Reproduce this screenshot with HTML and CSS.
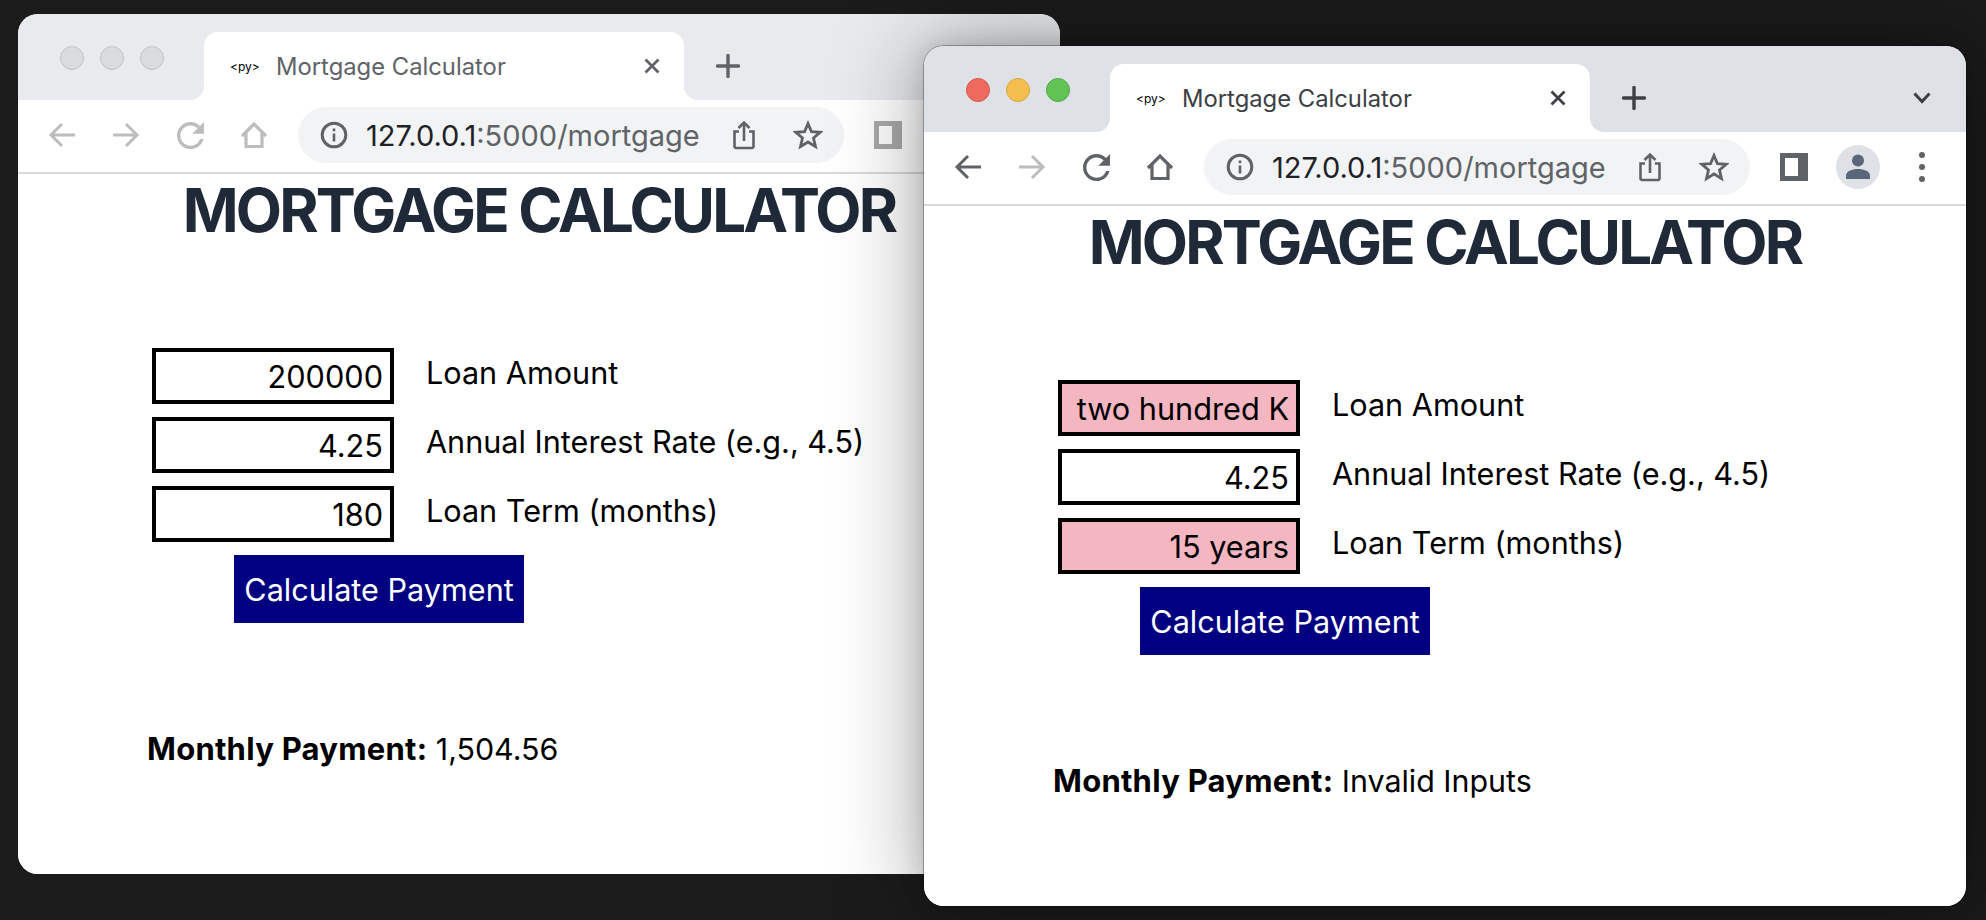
FILE: index.html
```html
<!DOCTYPE html>
<html lang="en">
<head>
<meta charset="utf-8">
<title>Mortgage Calculator</title>
<link rel="stylesheet" href="styles.css">
</head>
<body>
<svg class="defs" width="0" height="0" aria-hidden="true">
  <symbol id="i-back" viewBox="0 0 28 28"><path d="M27 14H4M14 3 3 14l11 11" fill="none" stroke="currentColor" stroke-width="3"/></symbol>
  <symbol id="i-forward" viewBox="0 0 28 28"><path d="M1 14h23M14 3l11 11-11 11" fill="none" stroke="currentColor" stroke-width="3"/></symbol>
  <symbol id="i-reload" viewBox="4 4 16 16"><path fill="currentColor" d="M17.65 6.35A7.95 7.95 0 0 0 12 4c-4.42 0-7.99 3.58-7.99 8s3.57 8 7.99 8c3.73 0 6.84-2.55 7.73-6h-2.08A5.99 5.99 0 0 1 12 18c-3.31 0-6-2.69-6-6s2.69-6 6-6c1.66 0 3.14.69 4.22 1.78L13 11h7V4l-2.35 2.35z"/></symbol>
  <symbol id="i-home" viewBox="0 0 28 28"><path d="M2 15 14 3l12 12M6 12v13.500h16V12" fill="none" stroke="currentColor" stroke-width="3.200"/></symbol>
  <symbol id="i-info" viewBox="0 0 28 28"><circle cx="14" cy="14" r="11.800" fill="none" stroke="currentColor" stroke-width="3"/><path d="M12.700 12.500h2.600v8h-2.600zM12.700 7.500h2.600v2.700h-2.600z" fill="currentColor"/></symbol>
  <symbol id="i-share" viewBox="0 0 24 30"><path d="M7 11.500H2.500v15a1.500 1.500 0 0 0 1.500 1.500h16a1.500 1.500 0 0 0 1.500-1.500v-15H17M12 21V3M6.500 8 12 2.500 17.500 8" fill="none" stroke="currentColor" stroke-width="2.600"/></symbol>
  <symbol id="i-star" viewBox="0 0 30 30"><path d="m15 3.500 3.400 8.100 8.800.7-6.700 5.700 2 8.600-7.500-4.600-7.500 4.600 2-8.600-6.700-5.700 8.800-.7z" fill="none" stroke="currentColor" stroke-width="2.800"/></symbol>
  <symbol id="i-close" viewBox="0 0 16 16"><path d="m1.500 1.500 13 13M14.500 1.500l-13 13" fill="none" stroke="currentColor" stroke-width="2.800"/></symbol>
  <symbol id="i-plus" viewBox="0 0 24 24"><path d="M12 1.500v21M1.500 12h21" fill="none" stroke="currentColor" stroke-width="3.400" stroke-linecap="round"/></symbol>
  <symbol id="i-chevron" viewBox="0 0 18 12"><path d="m1.500 1.500 7.500 8 7.500-8" fill="none" stroke="currentColor" stroke-width="3"/></symbol>
  <symbol id="i-user" viewBox="0 0 44 44"><circle cx="22" cy="15.500" r="6" fill="currentColor"/><path d="M10 34v-3c0-5 6-7 12-7s12 2 12 7v3z" fill="currentColor"/></symbol>
  <symbol id="i-dots" viewBox="0 0 8 32"><circle cx="4" cy="4" r="3" fill="currentColor"/><circle cx="4" cy="16" r="3" fill="currentColor"/><circle cx="4" cy="28" r="3" fill="currentColor"/></symbol>
</svg>

<section class="window window-inactive">
  <header class="strip">
    <div class="lights"><span class="light"></span><span class="light"></span><span class="light"></span></div>
    <div class="tab">
      <span class="favicon">&lt;py&gt;</span>
      <span class="tab-title">Mortgage Calculator</span>
      <svg class="ic-close"><use href="#i-close"/></svg>
    </div>
    <svg class="ic-plus"><use href="#i-plus"/></svg>
    <svg class="ic-chevron"><use href="#i-chevron"/></svg>
  </header>
  <nav class="toolbar">
    <span class="slot dim"><svg class="ic-arrow"><use href="#i-back"/></svg></span>
    <span class="slot dim"><svg class="ic-arrow"><use href="#i-forward"/></svg></span>
    <span class="slot dim"><svg class="ic-reload"><use href="#i-reload"/></svg></span>
    <span class="slot dim"><svg class="ic-arrow"><use href="#i-home"/></svg></span>
    <div class="pill">
      <svg class="ic-info"><use href="#i-info"/></svg>
      <span class="url">127.0.0.1<span class="url-rest">:5000/mortgage</span></span>
      <svg class="ic-share"><use href="#i-share"/></svg>
      <svg class="ic-star"><use href="#i-star"/></svg>
    </div>
    <span class="panel"></span>
    <span class="avatar"><svg class="ic-user"><use href="#i-user"/></svg></span>
    <svg class="ic-dots"><use href="#i-dots"/></svg>
  </nav>
  <main class="page">
    <h1 class="heading">MORTGAGE CALCULATOR</h1>
    <form class="calc">
      <div class="row"><input class="field" type="text" value="200000"><label class="field-label">Loan Amount</label></div>
      <div class="row"><input class="field" type="text" value="4.25"><label class="field-label">Annual Interest Rate (e.g., 4.5)</label></div>
      <div class="row"><input class="field" type="text" value="180"><label class="field-label">Loan Term (months)</label></div>
      <button class="submit" type="button">Calculate Payment</button>
    </form>
    <p class="result"><strong>Monthly Payment:</strong> 1,504.56</p>
  </main>
</section>

<section class="window window-active">
  <header class="strip">
    <div class="lights"><span class="light red"></span><span class="light yellow"></span><span class="light green"></span></div>
    <div class="tab">
      <span class="favicon">&lt;py&gt;</span>
      <span class="tab-title">Mortgage Calculator</span>
      <svg class="ic-close"><use href="#i-close"/></svg>
    </div>
    <svg class="ic-plus"><use href="#i-plus"/></svg>
    <svg class="ic-chevron"><use href="#i-chevron"/></svg>
  </header>
  <nav class="toolbar">
    <span class="slot"><svg class="ic-arrow"><use href="#i-back"/></svg></span>
    <span class="slot dim"><svg class="ic-arrow"><use href="#i-forward"/></svg></span>
    <span class="slot"><svg class="ic-reload"><use href="#i-reload"/></svg></span>
    <span class="slot"><svg class="ic-arrow"><use href="#i-home"/></svg></span>
    <div class="pill">
      <svg class="ic-info"><use href="#i-info"/></svg>
      <span class="url">127.0.0.1<span class="url-rest">:5000/mortgage</span></span>
      <svg class="ic-share"><use href="#i-share"/></svg>
      <svg class="ic-star"><use href="#i-star"/></svg>
    </div>
    <span class="panel"></span>
    <span class="avatar"><svg class="ic-user"><use href="#i-user"/></svg></span>
    <svg class="ic-dots"><use href="#i-dots"/></svg>
  </nav>
  <main class="page">
    <h1 class="heading">MORTGAGE CALCULATOR</h1>
    <form class="calc">
      <div class="row"><input class="field invalid" type="text" value="two hundred K"><label class="field-label">Loan Amount</label></div>
      <div class="row"><input class="field" type="text" value="4.25"><label class="field-label">Annual Interest Rate (e.g., 4.5)</label></div>
      <div class="row"><input class="field invalid" type="text" value="15 years"><label class="field-label">Loan Term (months)</label></div>
      <button class="submit" type="button">Calculate Payment</button>
    </form>
    <p class="result"><strong>Monthly Payment:</strong> Invalid Inputs</p>
  </main>
</section>
</body>
</html>
```

FILE: styles.css
```css
* { box-sizing: border-box; }

html, body { height: 100%; }

body {
  margin: 0;
  position: relative;
  overflow: hidden;
  background: #1b1b1b;
  font-family: Inter, "Liberation Sans", sans-serif;
  color: #000;
}

.defs { position: absolute; }

svg { display: block; flex: none; }

.window {
  position: absolute;
  width: 1042px;
  height: 860px;
  display: flex;
  flex-direction: column;
  overflow: hidden;
  border-radius: 20px;
  background: #fff;
}

.window-inactive {
  left: 18px;
  top: 14px;
  --strip: #e8eaed;
  --tab-text: #5f6368;
  --tab-icon: #5f6368;
  --panel: #a9a9a9;
  height: 860px;
}

.window-active {
  left: 924px;
  top: 46px;
  --strip: #dee1e6;
  --tab-text: #3c4043;
  --tab-icon: #3c4043;
  --panel: #5f6368;
  box-shadow: 0 0 0 1px rgba(0, 0, 0, .28), 0 0 90px rgba(0, 0, 0, .38), 0 0 24px rgba(0, 0, 0, .14);
}

.strip {
  flex: none;
  height: 86px;
  padding: 18px 35px 0 42px;
  display: flex;
  align-items: center;
  background: var(--strip);
}

.lights {
  align-self: flex-start;
  margin-top: 14px;
  display: flex;
  gap: 16px;
}

.light {
  width: 24px;
  height: 24px;
  border-radius: 50%;
  background: #dadbdd;
  border: 1px solid #c3c4c6;
}

.red { background: #ee6a5f; border-color: #d5564b; }
.yellow { background: #f5bf4f; border-color: #d9a53c; }
.green { background: #61c454; border-color: #50ab43; }

.tab {
  position: relative;
  margin-left: 40px;
  width: 480px;
  height: 68px;
  padding: 0 24px 0 26px;
  display: flex;
  align-items: center;
  background: #fff;
  border-radius: 14px 14px 0 0;
  color: var(--tab-text);
}

.tab::before,
.tab::after {
  content: "";
  position: absolute;
  bottom: 0;
  width: 14px;
  height: 14px;
}

.tab::before {
  left: -14px;
  background: radial-gradient(circle at 0 0, var(--strip) 13.500px, #fff 14.500px);
}

.tab::after {
  right: -14px;
  background: radial-gradient(circle at 100% 0, var(--strip) 13.500px, #fff 14.500px);
}

.favicon {
  width: 46px;
  font-size: 12px;
  color: #000;
}

.tab-title {
  flex: 1;
  font-size: 23.800px;
  white-space: nowrap;
}

.ic-close { width: 16px; height: 16px; color: var(--tab-icon); }

.ic-plus { width: 24px; height: 24px; margin-left: 32px; color: var(--tab-icon); }

.ic-chevron { width: 18px; height: 12px; margin-left: auto; color: #3c4043; }

.toolbar {
  flex: none;
  height: 74px;
  padding: 0 0 2px 12px;
  display: flex;
  align-items: center;
  background: #fff;
  border-bottom: 2px solid #d9d9d9;
}

.slot {
  width: 64px;
  display: flex;
  justify-content: center;
  color: #5f6368;
}

.slot.dim { color: #bdbdbd; }

.ic-arrow { width: 28px; height: 28px; }
.ic-reload { width: 27px; height: 27px; }

.pill {
  width: 546px;
  height: 56px;
  margin-left: 12px;
  padding: 0 21px 0 22px;
  display: flex;
  align-items: center;
  border-radius: 28px;
  background: #f1f3f4;
  color: #5f6368;
}

.ic-info { width: 28px; height: 28px; }

.url {
  flex: 1;
  margin-left: 18px;
  font-size: 29px;
  color: #202124;
  white-space: nowrap;
}

.url-rest { color: #5f6368; }

.ic-share { width: 24px; height: 30px; margin-right: 37px; }
.ic-star { width: 30px; height: 30px; }

.panel {
  width: 28px;
  height: 28px;
  margin-left: 30px;
  border: 5px solid var(--panel);
  border-right-width: 10px;
  background: #fff;
}

.avatar {
  width: 44px;
  height: 44px;
  margin-left: 28px;
  border-radius: 50%;
  background: #dee1e6;
  color: #5a6679;
}

.ic-user { width: 44px; height: 44px; }

.ic-dots { width: 8px; height: 32px; margin-left: 38px; color: #5f6368; }

.page {
  flex: 1;
  padding-left: 134px;
  background: #fff;
}

.heading {
  margin: 0 0 102px -134px;
  height: 72px;
  font-size: 60px;
  line-height: 72px;
  font-weight: 700;
  letter-spacing: -.047em;
  text-align: center;
  color: #1f2937;
}

.calc {
  display: flex;
  flex-direction: column;
  align-items: flex-start;
  gap: 13px;
}

.row {
  display: flex;
  align-items: center;
  gap: 32px;
}

.field {
  width: 242px;
  height: 56px;
  padding: 0 7px;
  border: 4px solid #000;
  border-radius: 0;
  outline: none;
  background: #fff;
  font: 30.700px Inter, "Liberation Sans", sans-serif;
  color: #000;
  text-align: right;
}

.field.invalid { background: #f4b6c0; }

.field-label {
  padding-bottom: 8px;
  font-size: 30.600px;
  white-space: nowrap;
}

.submit {
  width: 290px;
  height: 68px;
  margin-left: 82px;
  padding: 0;
  border: 0;
  background: #000080;
  color: #fff;
  font: 30.600px Inter, "Liberation Sans", sans-serif;
}

.result {
  margin: 108px 0 0 -5px;
  font-size: 30.400px;
  line-height: 36px;
}

.result strong { font-size: 31px; font-weight: 700; letter-spacing: .25px; }
```
